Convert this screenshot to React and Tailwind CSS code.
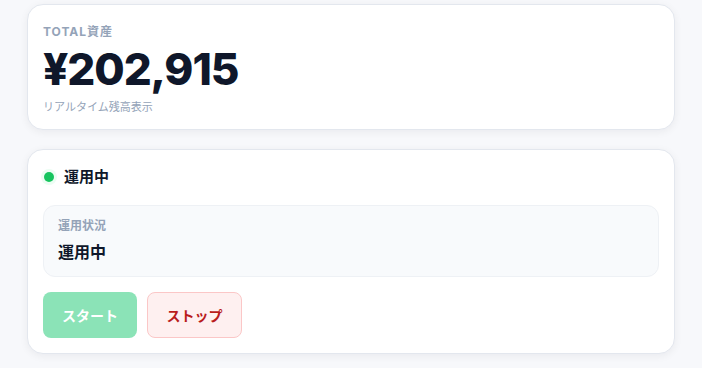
export default function App() {
  return (
    <div
      className="min-h-screen bg-[#f7f8fb] px-[27px] pt-[4px] pb-4"
      style={{ fontFamily: 'Inter, "Noto Sans CJK JP", sans-serif' }}
    >
      <div className="flex flex-col gap-[19px]">
        <section className="rounded-2xl border border-[#e3e7ee] bg-white px-[15px] pt-[19px] pb-[14px] shadow-[0_2px_8px_rgba(15,23,42,0.06)]">
          <p className="text-[12px] font-bold leading-4 tracking-[0.08em] text-[#94a3b8]">
            TOTAL資産
          </p>
          <p className="mt-[3px] text-[44px] font-extrabold leading-[52px] tracking-tight text-[#0f172a]">
            ¥202,915
          </p>
          <p className="mt-[4px] text-[11px] leading-4 text-[#94a3b8]">リアルタイム残高表示</p>
        </section>

        <section className="rounded-2xl border border-[#e3e7ee] bg-white px-[15px] pt-[17px] pb-[15px] shadow-[0_2px_8px_rgba(15,23,42,0.06)]">
          <div className="flex items-center gap-[10px]">
            <span className="ml-[1px] h-[10px] w-[10px] rounded-full bg-[#16c45e] ring-[3px] ring-[#ecfdf3]" />
            <span className="text-[15px] font-bold leading-5 text-[#0f172a]">運用中</span>
          </div>
          <div className="mt-[18px] rounded-xl border border-[#eef1f5] bg-[#f8fafc] px-[14px] pt-[12px] pb-[12px]">
            <p className="text-[12px] font-bold leading-4 text-[#94a3b8]">運用状況</p>
            <p className="mt-[6px] text-[16px] font-bold leading-6 text-[#0f172a]">運用中</p>
          </div>
          <div className="mt-[15px] flex gap-[10px]">
            <button className="h-[46px] w-[94px] rounded-lg bg-[#8be3b7] text-[14px] font-bold text-white">
              スタート
            </button>
            <button className="h-[46px] w-[95px] rounded-lg border border-[#fbc7c7] bg-[#fef0f0] text-[14px] font-bold text-[#b91c1c]">
              ストップ
            </button>
          </div>
        </section>
      </div>
    </div>
  );
}
